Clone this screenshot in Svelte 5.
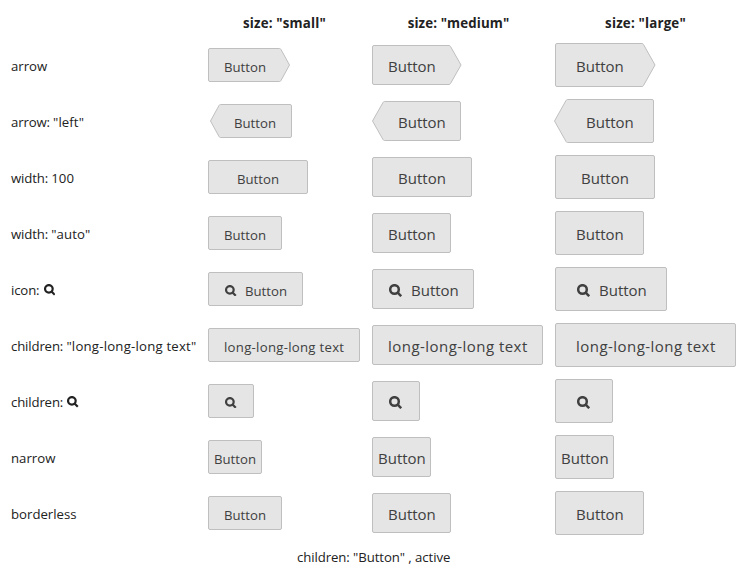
<script>
  const sizes = [
    { name: 'small', height: 34, icon: 11.5 },
    { name: 'medium', height: 40, icon: 13 },
    { name: 'large', height: 44, icon: 13 }
  ];

  // Widths are listed in the order small, medium, large.
  const rows = [
    { label: 'arrow', arrow: 'right', widths: [82, 89.5, 100.5], tip: [9, 11, 12] },
    { label: 'arrow: ', value: '"left"', arrow: 'left', widths: [82, 89, 100], tip: [9, 11, 12] },
    { label: 'width: ', value: '100', widths: [100, 100, 100], center: true },
    { label: 'width: ', value: '"auto"', widths: [74, 79, 89] },
    { label: 'icon: ', labelIcon: true, icon: true, widths: [95, 102, 112] },
    { label: 'children: ', value: '"long-long-long text"', text: 'long-long-long text', widths: [152, 171, 181] },
    { label: 'children: ', labelIcon: true, icon: true, text: '', widths: [46, 48, 58] },
    { label: 'narrow', narrow: true, widths: [54, 59, 59] },
    { label: 'borderless', widths: [74, 79, 89] }
  ];

  function outline(w, h, tip, dir) {
    const r = w - 0.5;
    const b = h - 0.5;
    const m = h / 2;
    return dir === 'right'
      ? `M2 .5H${r - tip - 1}Q${r - tip} .5 ${r - tip + 0.5} 1.5L${r} ${m}L${r - tip + 0.5} ${b - 1}Q${r - tip} ${b} ${r - tip - 1} ${b}H2Q.5 ${b} .5 ${b - 1.5}V2Q.5 .5 2 .5Z`
      : `M${r - 1.5} .5H${tip + 1.5}Q${tip + 0.5} .5 ${tip} 1.5L.5 ${m}L${tip} ${b - 1}Q${tip + 0.5} ${b} ${tip + 1.5} ${b}H${r - 1.5}Q${r} ${b} ${r} ${b - 1.5}V2Q${r} .5 ${r - 1.5} .5Z`;
  }
</script>

{#snippet search(size)}
  <svg class="search" width={size} height={size} viewBox="0 0 13 13" aria-hidden="true">
    <circle cx="5.5" cy="5.5" r="4.3" />
    <path d="M8.2 8.2L12.2 12.2" />
  </svg>
{/snippet}

<main>
  <div class="row head">
    <div></div>
    {#each sizes as s}
      <div class="title {s.name}">size: "{s.name}"</div>
    {/each}
  </div>
  {#each rows as row}
    <div class="row">
      <div class="label" class:long={row.text}><span class:prop={row.label.includes(':')}>{row.label}</span>{#if row.value}<span class="value">{row.value}</span>{/if}{#if row.labelIcon}{@render search(11.5)}{/if}</div>
      {#each sizes as s, i}
        <div class="cell">
          <button
            class="btn {s.name} {row.arrow ? 'arrow ' + row.arrow : ''}"
            class:center={row.center}
            class:narrow={row.narrow}
            class:long={row.text}
            style:width="{row.widths[i]}px"
          >
            {#if row.arrow}
              <svg class="shape" width={row.widths[i]} height={s.height} aria-hidden="true">
                <path d={outline(row.widths[i], s.height, row.tip[i], row.arrow)} />
              </svg>
            {/if}
            {#if row.icon}{@render search(s.icon)}{/if}
            {#if row.text !== ''}<span class="text">{row.text ?? 'Button'}</span>{/if}
          </button>
        </div>
      {/each}
    </div>
  {/each}
  <footer>children: "Button" , active</footer>
</main>

<style>
  :global(body) { background: #fff; }
  main {
    width: 746px;
    height: 566px;
    overflow: hidden;
    font: 13.2px/20px "Open Sans", "Noto Sans", sans-serif;
    color: #222;
  }
  .row {
    display: grid;
    grid-template-columns: 197px 164px 183px 191px;
    align-items: center;
    height: 56px;
    padding-left: 11px;
  }
  .head { height: 37px; }
  .title {
    width: 153px;
    padding-top: 9px;
    text-align: center;
    font-weight: 700;
    font-size: 13.3px;
    letter-spacing: 0.19px;
    white-space: pre;
  }
  .title.medium { width: 173px; letter-spacing: 0.12px; }
  .title.large { width: 181px; }
  .label {
    display: flex;
    align-items: center;
    padding-top: 2px;
    white-space: pre;
  }
  .prop { letter-spacing: -0.15px; }
  .value { letter-spacing: 0.08px; }
  .label.long .value { letter-spacing: 0.21px; }
  .cell { display: flex; }
  .btn {
    box-sizing: border-box;
    position: relative;
    display: flex;
    align-items: center;
    height: 34px;
    margin: 0;
    padding: 3px 0 0 15px;
    border: 1px solid #bfbfbf;
    border-radius: 2px;
    background: #e5e5e5;
    color: #404040;
    font: 13.2px/20px "Open Sans", "Noto Sans", sans-serif;
    white-space: nowrap;
  }
  .medium.btn, .large.btn { font-size: 15px; padding-top: 2px; }
  .medium.btn { height: 40px; }
  .large.btn { height: 44px; padding-left: 20px; }
  .btn.long { letter-spacing: 0.27px; }
  .btn.long.medium, .btn.long.large { letter-spacing: 0.46px; }
  .btn.narrow { padding-left: 5px; }
  .btn.center { justify-content: center; padding-left: 0; }
  .btn.arrow { border: 0; background: none; padding-left: 16px; }
  .btn.arrow.large { padding-left: 21px; }
  .btn.left { margin-left: 2px; padding-left: 24px; }
  .btn.left.medium { margin-left: 0; padding-left: 26px; }
  .btn.arrow.left.large { margin-left: -1px; padding-left: 32px; }
  .shape { position: absolute; left: 0; top: 0; }
  .shape path { fill: #e5e5e5; stroke: #bfbfbf; stroke-width: 1; }
  .text { position: relative; }
  .search {
    flex: none;
    fill: none;
    stroke: currentColor;
    stroke-width: 2.5;
  }
  .label .search { margin-left: 1px; }
  .btn .search { margin-left: 1px; }
  .search + .text { margin-left: 9px; }
  .small .search + .text { margin-left: 8.5px; }
  footer { padding: 6px 0 0 297px; letter-spacing: -0.08px; }
</style>
